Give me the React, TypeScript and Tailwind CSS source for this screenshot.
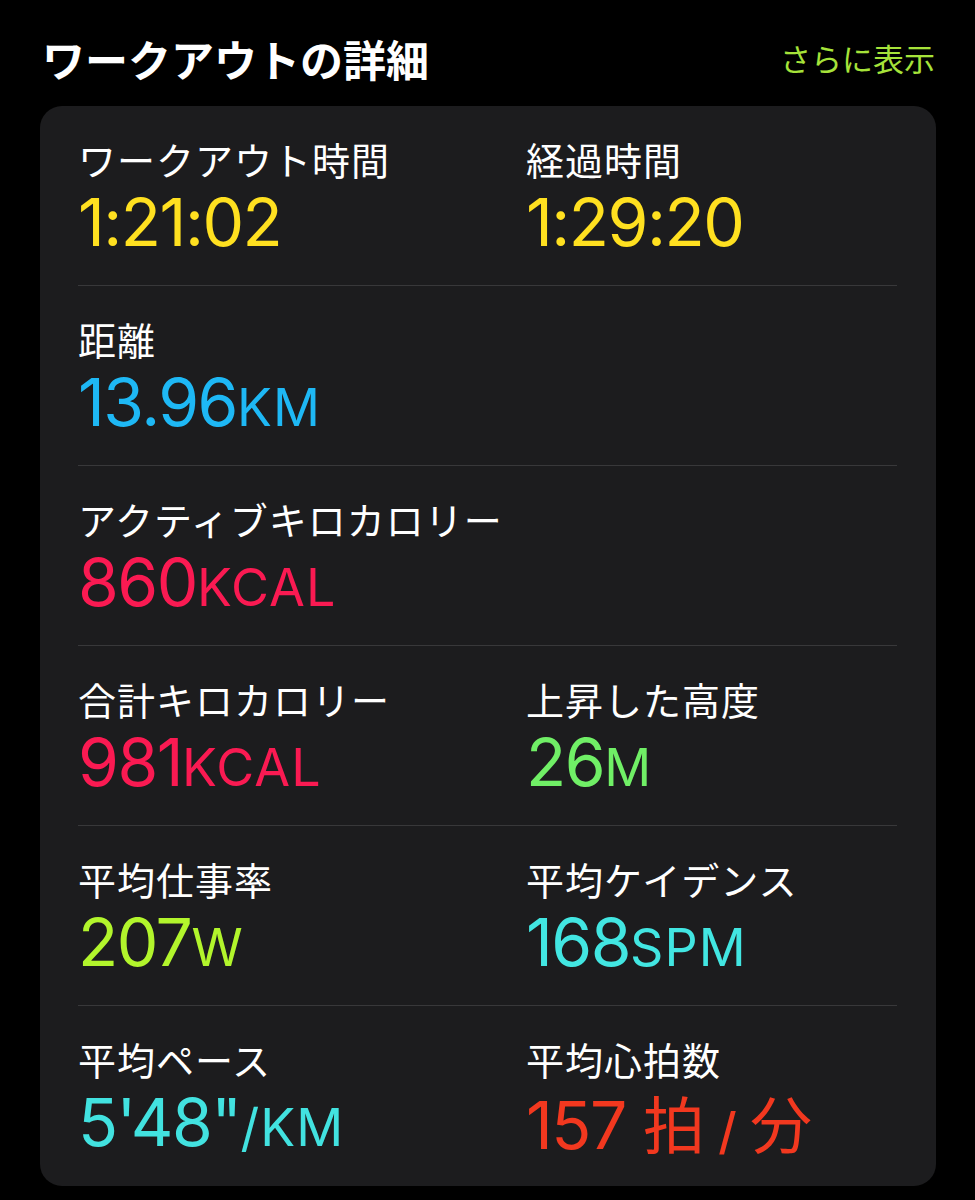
import React from "react";

type Part = { text: string; size?: "unit" | "cjk" | "slash" };
type Stat = { label: string; color: string; parts: Part[] };

const rows: Stat[][] = [
  [
    { label: "ワークアウト時間", color: "text-[#ffe020]", parts: [{ text: "1:21:02" }] },
    { label: "経過時間", color: "text-[#ffe020]", parts: [{ text: "1:29:20" }] },
  ],
  [{ label: "距離", color: "text-[#1eb8f5]", parts: [{ text: "13.96" }, { text: "KM", size: "unit" }] }],
  [
    {
      label: "アクティブキロカロリー",
      color: "text-[#fa1a52]",
      parts: [{ text: "860" }, { text: "KCAL", size: "unit" }],
    },
  ],
  [
    { label: "合計キロカロリー", color: "text-[#fa1a52]", parts: [{ text: "981" }, { text: "KCAL", size: "unit" }] },
    { label: "上昇した高度", color: "text-[#70ef66]", parts: [{ text: "26" }, { text: "M", size: "unit" }] },
  ],
  [
    { label: "平均仕事率", color: "text-[#b2f52c]", parts: [{ text: "207" }, { text: "W", size: "unit" }] },
    { label: "平均ケイデンス", color: "text-[#42e6e2]", parts: [{ text: "168" }, { text: "SPM", size: "unit" }] },
  ],
  [
    { label: "平均ペース", color: "text-[#42e2e0]", parts: [{ text: "5'48\"" }, { text: "/KM", size: "unit" }] },
    {
      label: "平均心拍数",
      color: "text-[#f2381f]",
      parts: [
        { text: "157 " },
        { text: "拍", size: "cjk" },
        { text: " / ", size: "slash" },
        { text: "分", size: "cjk" },
      ],
    },
  ],
];

// units render like small caps next to the big number
const partClass = (p: Part) => {
  if (p.size === "unit") return "text-[52px] tracking-[1px]";
  if (p.size === "cjk") return "text-[62px] font-['Noto_Sans_CJK_JP'] tracking-normal";
  if (p.size === "slash") return "text-[50px] font-medium tracking-normal";
  return "tracking-[-1.5px]";
};

function StatCell({ stat }: { stat: Stat }) {
  return (
    <div>
      <div className="text-[38px] leading-[44px] tracking-[1px] text-white">{stat.label}</div>
      <div className={`mt-[8px] text-[66px] leading-[66px] font-['Inter'] ${stat.color}`}>
        {stat.parts.map((p, i) => (
          <span key={i} className={partClass(p)}>
            {p.text}
          </span>
        ))}
      </div>
    </div>
  );
}

export default function App() {
  return (
    <div className="min-h-[1200px] w-[975px] bg-black pt-[33px] font-['Noto_Sans_CJK_JP',sans-serif]">
      <div className="flex h-[50px] items-center justify-between pl-[42px] pr-[40px]">
        <h1 className="text-[43px] font-bold text-white">ワークアウトの詳細</h1>
        <span className="text-[31px] text-[#a6e33a]">さらに表示</span>
      </div>

      <div className="mt-[23px] ml-[40px] mr-[39px] rounded-[22px] bg-[#1c1c1e] pl-[38px] pr-[39px]">
        {rows.map((row, i) => (
          <div
            key={i}
            className={`grid h-[180px] grid-cols-[448px_1fr] pt-[31px] ${
              i < rows.length - 1 ? "border-b border-[#38383a]" : ""
            }`}
          >
            {row.map((s) => (
              <StatCell key={s.label} stat={s} />
            ))}
          </div>
        ))}
      </div>
    </div>
  );
}
